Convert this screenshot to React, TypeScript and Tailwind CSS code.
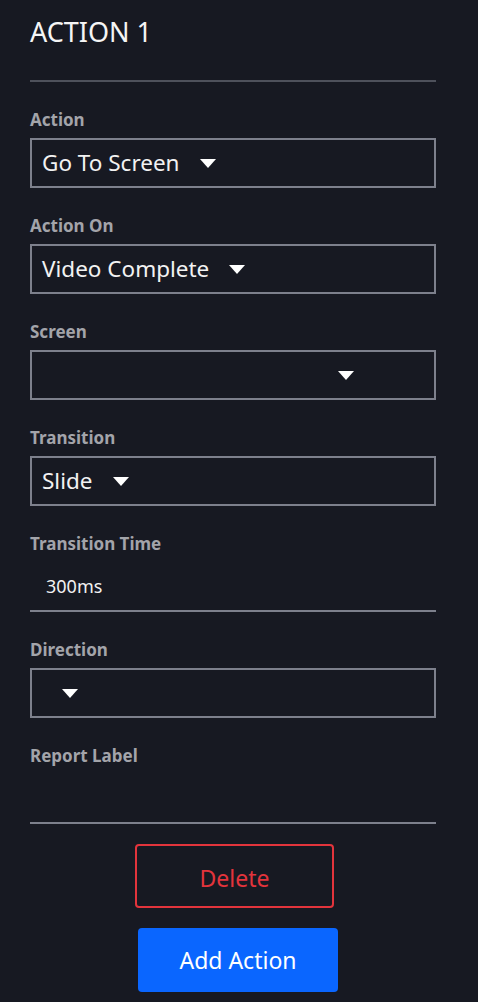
import React from 'react'

const Caret = () => (
  <svg width="16" height="9" viewBox="0 0 16 9" className="shrink-0">
    <path d="M0 0 L16 0 L8 9 Z" fill="#ffffff" />
  </svg>
)

function Label({ children }: { children: React.ReactNode }) {
  return <div className="h-6 mb-[6px] text-[17px] leading-6 font-bold text-[#a3a4aa]">{children}</div>
}

function Select({ value, spacer }: { value?: string; spacer?: number }) {
  return (
    <div className="h-[50px] border-2 border-[#7d808c] flex items-center pl-[10px] mb-[26px]">
      {value && <span className="text-[22.5px] text-[#f2f2f2] mr-5 leading-none">{value}</span>}
      {spacer ? <span style={{ width: spacer }} /> : null}
      <Caret />
    </div>
  )
}

function Underline({ value, last }: { value?: string; last?: boolean }) {
  return (
    <div className={last ? 'mb-5' : 'mb-[26px]'}>
      <div className="h-[50px] border-b-2 border-[#7d808c] flex items-center pl-4">
        <span className="text-[18px] text-[#f2f2f2]">{value}</span>
      </div>
    </div>
  )
}

export default function App() {
  return (
    <div
      className="min-h-screen w-[478px] bg-[#171922] px-[30px] pt-[10px]"
      style={{ fontFamily: '"Noto Sans", "Open Sans", sans-serif' }}
    >
      <div className="w-[406px]">
        {/* header */}
        <div className="h-[44px] flex items-center text-[27px] text-[#f5f5f5]">ACTION 1</div>
        <div className="h-[2px] bg-[#4e515b] mt-[26px] mb-[26px]" />

        <Label>Action</Label>
        <Select value="Go To Screen" />

        <Label>Action On</Label>
        <Select value="Video Complete" />

        <Label>Screen</Label>
        <Select spacer={296} />

        <Label>Transition</Label>
        <Select value="Slide" />

        <Label>Transition Time</Label>
        <Underline value="300ms" />

        <Label>Direction</Label>
        <Select spacer={20} />

        <Label>Report Label</Label>
        <Underline last />

        {/* buttons */}
        <div className="flex flex-col">
          <button className="ml-[105px] w-[199px] h-[64px] pt-1 border-2 border-[#e3343c] rounded-[4px] text-[23px] text-[#e3343c]">
            Delete
          </button>
          <button className="ml-[108px] mt-5 w-[200px] h-[64px] bg-[#0a66ff] rounded-[4px] text-[23px] text-white">
            Add Action
          </button>
        </div>
      </div>
    </div>
  )
}
